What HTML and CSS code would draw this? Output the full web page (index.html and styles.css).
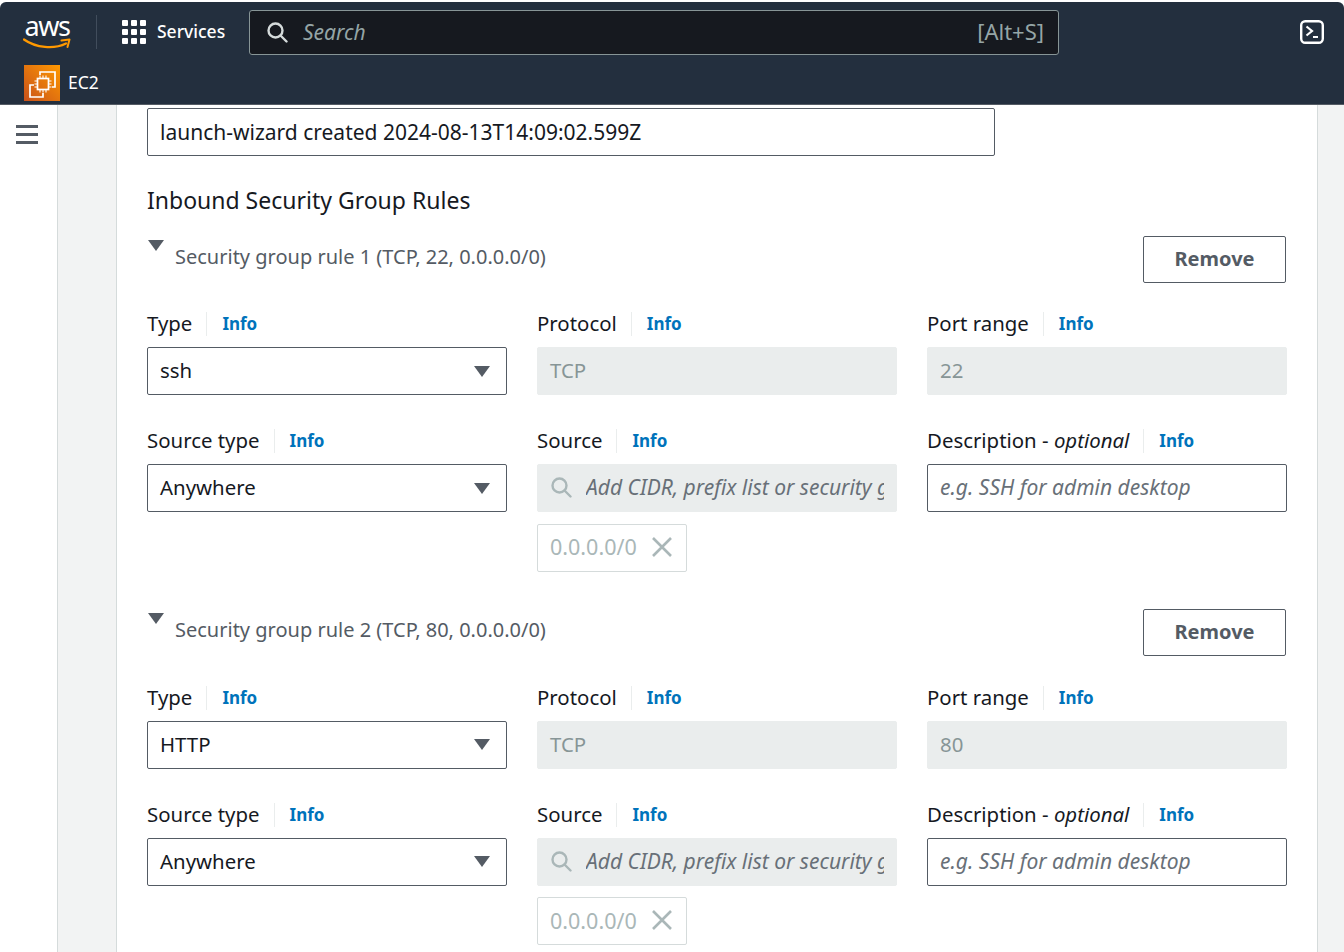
FILE: index.html
```html
<!DOCTYPE html>
<html lang="en">
<head>
    <meta charset="UTF-8">
    <title>Launch an instance | EC2</title>
    <link rel="stylesheet" href="styles.css">
</head>
<body>
    <header class="topbar">
        <div class="nav-row">
            <div class="logo">
                <span class="logo-text">aws</span>
                <svg class="logo-smile" width="48" height="12" viewBox="0 0 48 12">
                    <path d="M1 1.5C13 10 31 11.5 43 5.5" fill="none" stroke="#ff9900" stroke-width="2.2" stroke-linecap="round"/>
                    <path d="M38.5 2.6L46.5 1.4L44.5 9" fill="none" stroke="#ff9900" stroke-width="2" stroke-linecap="round" stroke-linejoin="round"/>
                </svg>
            </div>
            <div class="nav-sep"></div>
            <div class="services">
                <svg width="24" height="24" viewBox="0 0 24 24" fill="#fff">
                    <rect x="0" y="0" width="6" height="6" rx="1"/><rect x="9" y="0" width="6" height="6" rx="1"/><rect x="18" y="0" width="6" height="6" rx="1"/>
                    <rect x="0" y="9" width="6" height="6" rx="1"/><rect x="9" y="9" width="6" height="6" rx="1"/><rect x="18" y="9" width="6" height="6" rx="1"/>
                    <rect x="0" y="18" width="6" height="6" rx="1"/><rect x="9" y="18" width="6" height="6" rx="1"/><rect x="18" y="18" width="6" height="6" rx="1"/>
                </svg>
                <span class="services-text">Services</span>
            </div>
            <div class="search">
                <svg width="22" height="22" viewBox="0 0 22 22" fill="none" stroke="#d5dbdb" stroke-width="2.4">
                    <circle cx="9.5" cy="9.5" r="7"/><path d="M14.5 14.5L20.5 20.5" stroke-linecap="round"/>
                </svg>
                <span class="search-text">Search</span>
                <span class="search-key">[Alt+S]</span>
            </div>
            <svg class="shell-icon" width="24" height="24" viewBox="0 0 24 24" fill="none" stroke="#fff">
                <rect x="1.2" y="1.2" width="21.6" height="21.6" rx="4" stroke-width="2.4"/>
                <path d="M6.500 6.500L12 11L6.500 15.500" stroke-width="2.200"/>
                <path d="M13 17H18" stroke-width="2"/>
            </svg>
        </div>
        <div class="service-row">
            <div class="ec2-icon">
                <svg width="36" height="36" viewBox="0 0 36 36" fill="none" stroke="#fff" stroke-width="1.7">
                    <path d="M16 10V7H31V22H28"/>
                    <path d="M10 20H6V32H19V28"/>
                    <rect x="13.5" y="13.5" width="11" height="11"/>
                    <path d="M16 10.500V13M19 10.500V13M22 10.500V13M16 25V27.500M19 25V27.500M22 25V27.500M10.500 16H13M10.500 19H13M10.500 22H13M25 16H27.500M25 19H27.500M25 22H27.500" stroke-width="1.1"/>
                </svg>
            </div>
            <span class="service-name">EC2</span>
        </div>
    </header>

    <div class="layout">
        <aside class="side-nav">
            <div class="burger"><span></span><span></span><span></span></div>
        </aside>
        <main class="content">
            <section class="panel">
                <div class="text-box name-box">launch-wizard created 2024-08-13T14:09:02.599Z</div>
                <h2 class="section-title">Inbound Security Group Rules</h2>

                <div class="rule">
                    <div class="rule-head">
                        <span class="caret"></span>
                        <span class="rule-title">Security group rule 1 (TCP, 22, 0.0.0.0/0)</span>
                        <button class="remove-btn">Remove</button>
                    </div>
                    <div class="rule-grid">
                        <div class="field">
                            <div class="field-label"><span>Type</span><a class="info">Info</a></div>
                            <div class="text-box select-box">ssh<span class="select-arrow"></span></div>
                        </div>
                        <div class="field">
                            <div class="field-label"><span>Protocol</span><a class="info">Info</a></div>
                            <div class="text-box disabled-box">TCP</div>
                        </div>
                        <div class="field">
                            <div class="field-label"><span>Port range</span><a class="info">Info</a></div>
                            <div class="text-box disabled-box">22</div>
                        </div>
                        <div class="field">
                            <div class="field-label"><span>Source type</span><a class="info">Info</a></div>
                            <div class="text-box select-box">Anywhere<span class="select-arrow"></span></div>
                        </div>
                        <div class="field">
                            <div class="field-label"><span>Source</span><a class="info">Info</a></div>
                            <div class="text-box disabled-box source-box">
                                <svg width="22" height="22" viewBox="0 0 22 22" fill="none" stroke="#aab7b8" stroke-width="2.4">
                                    <circle cx="9.5" cy="9.5" r="7"/><path d="M14.5 14.5L20.5 20.5" stroke-linecap="round"/>
                                </svg>
                                <span class="source-hint">Add CIDR, prefix list or security group</span>
                            </div>
                            <div class="token">0.0.0.0/0
                                <svg width="22" height="22" viewBox="0 0 22 22" fill="none" stroke="#aab7b8" stroke-width="2.6">
                                    <path d="M2 2L20 20M20 2L2 20"/>
                                </svg>
                            </div>
                        </div>
                        <div class="field">
                            <div class="field-label"><span>Description - <em>optional</em></span><a class="info">Info</a></div>
                            <div class="text-box hint-box">e.g. SSH for admin desktop</div>
                        </div>
                    </div>
                </div>

                <div class="rule">
                    <div class="rule-head">
                        <span class="caret"></span>
                        <span class="rule-title">Security group rule 2 (TCP, 80, 0.0.0.0/0)</span>
                        <button class="remove-btn">Remove</button>
                    </div>
                    <div class="rule-grid">
                        <div class="field">
                            <div class="field-label"><span>Type</span><a class="info">Info</a></div>
                            <div class="text-box select-box">HTTP<span class="select-arrow"></span></div>
                        </div>
                        <div class="field">
                            <div class="field-label"><span>Protocol</span><a class="info">Info</a></div>
                            <div class="text-box disabled-box">TCP</div>
                        </div>
                        <div class="field">
                            <div class="field-label"><span>Port range</span><a class="info">Info</a></div>
                            <div class="text-box disabled-box">80</div>
                        </div>
                        <div class="field">
                            <div class="field-label"><span>Source type</span><a class="info">Info</a></div>
                            <div class="text-box select-box">Anywhere<span class="select-arrow"></span></div>
                        </div>
                        <div class="field">
                            <div class="field-label"><span>Source</span><a class="info">Info</a></div>
                            <div class="text-box disabled-box source-box">
                                <svg width="22" height="22" viewBox="0 0 22 22" fill="none" stroke="#aab7b8" stroke-width="2.4">
                                    <circle cx="9.5" cy="9.5" r="7"/><path d="M14.5 14.5L20.5 20.5" stroke-linecap="round"/>
                                </svg>
                                <span class="source-hint">Add CIDR, prefix list or security group</span>
                            </div>
                            <div class="token">0.0.0.0/0
                                <svg width="22" height="22" viewBox="0 0 22 22" fill="none" stroke="#aab7b8" stroke-width="2.6">
                                    <path d="M2 2L20 20M20 2L2 20"/>
                                </svg>
                            </div>
                        </div>
                        <div class="field">
                            <div class="field-label"><span>Description - <em>optional</em></span><a class="info">Info</a></div>
                            <div class="text-box hint-box">e.g. SSH for admin desktop</div>
                        </div>
                    </div>
                </div>
            </section>
        </main>
    </div>
</body>
</html>
```

FILE: styles.css
```css
* {
    box-sizing: border-box;
}
html, body {
    height: 952px;
    overflow: hidden;
}
body {
    margin: 0;
    padding-top: 2px;
    background: #fff;
    color: #16191f;
    font-family: "Noto Sans", "Open Sans", sans-serif;
    font-size: 20.4px;
}

/* top bar */
.topbar {
    height: 103px;
    background: #232f3e;
    border-radius: 6px 6px 0 0;
    border-bottom: 1px solid #545b64;
    color: #fff;
}
.nav-row {
    display: flex;
    align-items: center;
    height: 60px;
    padding: 0 20px 0 23px;
}
.logo {
    flex: none;
    width: 48px;
    display: flex;
    flex-direction: column;
    align-items: center;
}
.logo-text {
    font-size: 27px;
    line-height: 22px;
    height: 22px;
    letter-spacing: -1.5px;
}
.logo-smile {
    flex: none;
    margin-top: 1px;
}
.nav-sep {
    width: 1px;
    height: 34px;
    background: #414d5c;
    margin: 0 25px;
}
.services {
    display: flex;
    align-items: center;
    gap: 11px;
    font-size: 17.5px;
    font-weight: 500;
    width: 127px;
}
.services-text {
    padding-bottom: 2px;
}
.search {
    display: flex;
    align-items: center;
    width: 810px;
    height: 45px;
    padding: 0 14px 0 16px;
    background: #16191f;
    border: 1px solid #879596;
    border-radius: 3px;
}
.search-text {
    margin-left: 15px;
    font-size: 21px;
    font-style: italic;
    color: #95a5a6;
    flex: 1;
}
.search-key {
    padding-bottom: 2px;
    font-size: 22px;
    color: #95a5a6;
}
.shell-icon {
    margin-left: auto;
}
.service-row {
    display: flex;
    align-items: center;
    gap: 8px;
    padding: 3px 0 0 24px;
    font-size: 17.5px;
}
.service-name {
    padding-bottom: 2px;
}
.ec2-icon {
    width: 36px;
    height: 36px;
    background: linear-gradient(45deg, #c8511b, #ff9900);
}
.ec2-icon svg {
    display: block;
}

/* page body */
.layout {
    display: flex;
    height: 847px;
}
.side-nav {
    flex: none;
    width: 58px;
    padding: 20px 0 0 16px;
    background: #fff;
    border-right: 1px solid #d5dbdb;
}
.burger span {
    display: block;
    width: 22px;
    height: 3px;
    margin-bottom: 5px;
    background: #545b64;
}
.content {
    flex: 1;
    min-width: 0;
    padding: 0 26px 0 58px;
    background: #f2f3f3;
}
.panel {
    height: 100%;
    padding: 3px 30px 0 30px;
    background: #fff;
    border-left: 1px solid #d5dbdb;
    border-right: 1px solid #d5dbdb;
}
.section-title {
    margin: 28px 0 0;
    font-size: 23px;
    font-weight: 400;
    line-height: 32px;
}

/* form controls */
.text-box {
    display: flex;
    align-items: center;
    height: 48px;
    padding: 0 12px 2px;
    background: #fff;
    border: 1px solid #545b64;
    border-radius: 2px;
    white-space: nowrap;
}
.name-box {
    width: 848px;
    padding-bottom: 1px;
    font-size: 21px;
}
.select-box {
    justify-content: space-between;
}
.select-arrow {
    width: 0;
    height: 0;
    margin: 2px 4px 0 0;
    border-left: 8px solid transparent;
    border-right: 8px solid transparent;
    border-top: 11px solid #545b64;
}
.disabled-box {
    background: #eaeded;
    border-color: #eaeded;
    color: #879596;
}
.source-box {
    gap: 14px;
    overflow: hidden;
}
.source-box svg {
    flex: none;
}
.source-hint {
    overflow: hidden;
    font-size: 21px;
    font-style: italic;
    color: #687078;
}
.hint-box {
    font-size: 21px;
    font-style: italic;
    color: #687078;
}
.token {
    display: flex;
    align-items: center;
    gap: 14px;
    width: 150px;
    height: 48px;
    margin-top: 11.6px;
    padding: 0 0 2px 12px;
    border: 1px solid #d5dbdb;
    border-radius: 2px;
    color: #aab7b8;
    font-size: 21.5px;
}

/* rules */
.rule {
    height: 373.5px;
}
.rule-head {
    display: flex;
    align-items: flex-start;
    height: 92px;
    padding-top: 19.6px;
}
.caret {
    width: 0;
    height: 0;
    margin: 4px 0 0 1px;
    border-left: 8px solid transparent;
    border-right: 8px solid transparent;
    border-top: 11px solid #545b64;
}
.rule-title {
    margin: 7px 0 0 11px;
    color: #545b64;
    font-size: 20px;
    flex: 1;
}
.remove-btn {
    width: 143px;
    height: 47px;
    margin-right: 1px;
    padding-bottom: 3px;
    background: #fff;
    border: 1px solid #545b64;
    border-radius: 2px;
    color: #545b64;
    font-family: inherit;
    font-size: 20px;
    font-weight: 700;
}
.rule-grid {
    display: grid;
    grid-template-columns: repeat(3, 360px);
    column-gap: 30px;
    row-gap: 30px;
}
.field-label {
    display: flex;
    align-items: center;
    height: 32px;
    margin-bottom: 7px;
    padding-bottom: 2px;
}
.field-label em {
    font-style: italic;
}
.info {
    margin: 2px 0 0 14px;
    padding-left: 15px;
    border-left: 1px solid #eaeded;
    color: #0073bb;
    font-size: 17px;
    font-weight: 700;
    line-height: 24px;
}
```
